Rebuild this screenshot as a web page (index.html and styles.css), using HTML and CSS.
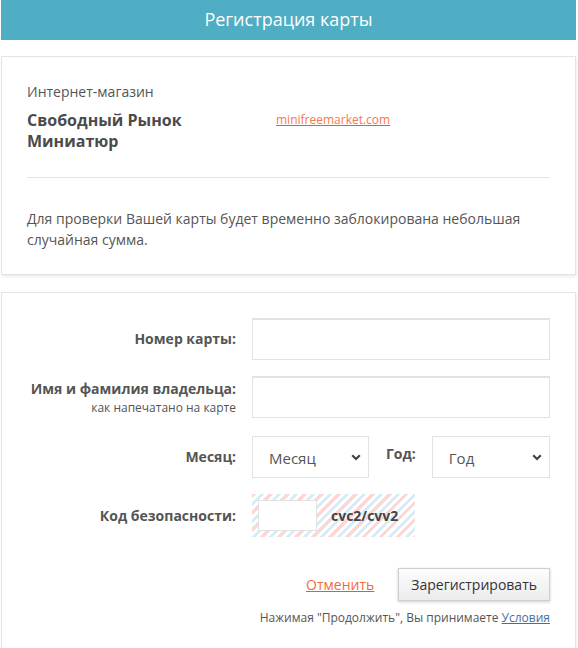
FILE: index.html
```html
<!DOCTYPE html>
<html lang="ru">
<head>
    <meta charset="UTF-8">
    <meta name="viewport" content="width=device-width, initial-scale=1.0">
    <title>Регистрация карты</title>
    <link rel="stylesheet" href="styles.css">
</head>
<body>
    <div class="page">
        <h1 class="header">Регистрация карты</h1>

        <div class="card shop">
            <div class="shop-label">Интернет-магазин</div>
            <div class="shop-row">
                <div class="shop-name">Свободный Рынок Миниатюр</div>
                <a class="shop-link" href="#">minifreemarket.com</a>
            </div>
            <hr class="divider">
            <p class="note">Для проверки Вашей карты будет временно заблокирована небольшая случайная сумма.</p>
        </div>

        <div class="card form-card">
            <form class="card-form">
                <label class="field-label" for="cardNumber">Номер карты:</label>
                <input class="text-input" type="text" id="cardNumber">

                <label class="field-label" for="holder">
                    Имя и фамилия владельца:
                    <span class="hint">как напечатано на карте</span>
                </label>
                <input class="text-input" type="text" id="holder">

                <label class="field-label date-label" for="month">Месяц:</label>
                <div class="date-row">
                    <div class="select-wrap month">
                        <select id="month" class="select">
                            <option>Месяц</option>
                        </select>
                        <svg class="chevron" width="10" height="7" viewBox="0 0 10 7"><path d="M1.2 1.2 L5 5 L8.8 1.2" fill="none" stroke="#444" stroke-width="2.2"/></svg>
                    </div>
                    <label class="field-label year-label" for="year">Год:</label>
                    <div class="select-wrap year">
                        <select id="year" class="select">
                            <option>Год</option>
                        </select>
                        <svg class="chevron" width="10" height="7" viewBox="0 0 10 7"><path d="M1.2 1.2 L5 5 L8.8 1.2" fill="none" stroke="#444" stroke-width="2.2"/></svg>
                    </div>
                </div>

                <label class="field-label" for="cvc">Код безопасности:</label>
                <div class="cvc-box">
                    <input class="cvc-input" type="text" id="cvc">
                    <span class="cvc-text">cvc2/cvv2</span>
                </div>
            </form>

            <div class="actions">
                <a class="cancel" href="#">Отменить</a>
                <button class="submit" type="button">Зарегистрировать</button>
            </div>
            <div class="terms">Нажимая "Продолжить", Вы принимаете <a href="#">Условия</a></div>
        </div>
    </div>
</body>
</html>
```

FILE: styles.css
```css
body {
    margin: 0;
    background: #fff;
    font-family: "Open Sans", "Noto Sans", sans-serif;
    font-size: 14px;
    color: #555;
}
.page {
    padding: 0 2px 0 1px;
}
.header {
    margin: 0;
    height: 40px;
    line-height: 38px;
    background: #4faec3;
    color: #fff;
    font-size: 18px;
    font-weight: normal;
    text-align: center;
}
.card {
    border: 1px solid #e4e4e4;
    box-shadow: 1px 2px 3px rgba(0, 0, 0, 0.07);
    background: #fff;
}
.shop {
    margin-top: 16px;
    padding: 25px 25px 24px 25px;
}
.shop-label {
    line-height: 20px;
}
.shop-row {
    display: flex;
    margin-top: 8px;
}
.shop-name {
    width: 232px;
    margin-right: 17px;
    font-size: 16px;
    font-weight: bold;
    line-height: 21px;
    color: #4b4b4b;
}
.shop-link {
    font-size: 12px;
    line-height: 20px;
    color: #f7794e;
    text-decoration-color: #f25a1d;
}
.divider {
    border: 0;
    border-top: 1px solid #e4e4e4;
    margin: 25px 0 0 0;
}
.note {
    margin: 30px 0 0 0;
    line-height: 21px;
}
.form-card {
    margin-top: 17px;
    padding: 25px 25px 40px 25px;
}
.card-form {
    display: grid;
    grid-template-columns: 209px 298px;
    column-gap: 16px;
    row-gap: 16px;
    align-items: center;
}
.field-label {
    text-align: right;
    font-weight: bold;
    color: #555;
    line-height: 20px;
}
.hint {
    display: block;
    font-size: 12px;
    font-weight: normal;
    line-height: 17px;
}
.text-input {
    box-sizing: border-box;
    height: 42px;
    border: 1px solid #e2e2e2;
    border-top-width: 2px;
    padding: 0 12px;
    font: inherit;
    outline: none;
}
.date-label {
    margin-top: 2px;
}
.date-row {
    display: flex;
    align-items: center;
    margin-top: 2px;
}
.select-wrap {
    position: relative;
}
.select-wrap.month {
    width: 117px;
}
.select-wrap.year {
    flex: 1;
}
.select {
    -webkit-appearance: none;
    appearance: none;
    box-sizing: border-box;
    width: 100%;
    height: 42px;
    border: 1px solid #e2e2e2;
    border-radius: 0;
    background: #fff;
    padding: 2px 0 0 16px;
    font-family: inherit;
    font-size: 15px;
    color: #555;
}
.chevron {
    position: absolute;
    right: 8px;
    top: 18px;
    pointer-events: none;
}
.year-label {
    margin: 8px 16px 0 17px;
    line-height: 20px;
    align-self: flex-start;
}
.cvc-box {
    width: 163px;
    height: 43px;
    box-sizing: border-box;
    padding: 6px;
    display: flex;
    align-items: center;
    background: repeating-linear-gradient(135deg,
        #fdd6d6 0, #fdd6d6 3px,
        #fff 3px, #fff 6px,
        #d6ecf8 6px, #d6ecf8 9px,
        #fff 9px, #fff 12px);
}
.cvc-input {
    box-sizing: border-box;
    width: 59px;
    height: 31px;
    border: 1px solid #e2e2e2;
    background: #fff;
    outline: none;
}
.cvc-text {
    margin-left: 14px;
    font-weight: bold;
    color: #444;
}
.actions {
    display: flex;
    justify-content: flex-end;
    align-items: center;
    margin-top: 31px;
}
.cancel {
    margin-right: 24px;
    color: #f36b3a;
    text-decoration-color: #f25a1d;
}
.submit {
    height: 33px;
    padding: 0 12px;
    border: 1px solid #cfcfcf;
    background: linear-gradient(#fdfdfd, #ececec);
    box-shadow: 0 1px 3px rgba(0, 0, 0, 0.2);
    font-family: inherit;
    font-size: 14px;
    color: #333;
}
.terms {
    margin-top: 8px;
    text-align: right;
    font-size: 12px;
    line-height: 18px;
    color: #555;
}
.terms a {
    color: #3d6fa8;
}
```
